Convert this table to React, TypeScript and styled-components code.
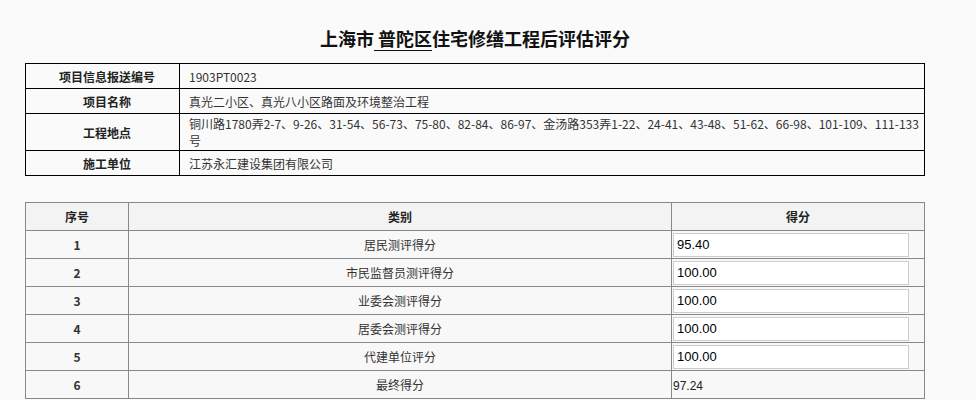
import React from "react";
import styled, { createGlobalStyle } from "styled-components";

const GlobalStyle = createGlobalStyle`
  html, body {
    margin: 0;
    padding: 0;
    background: #fafafa;
  }
  body {
    font-family: "Noto Sans CJK SC", "Noto Sans", sans-serif;
    font-size: 12px;
    color: #333;
  }
`;

const Page = styled.div`
  width: 900px;
  padding: 26px 0 0 25px;
`;

const Title = styled.h2`
  margin: 0 0 13px;
  font-size: 18px;
  line-height: 24px;
  font-weight: bold;
  color: #111;
  text-align: center;
  u {
    text-decoration: underline;
    text-decoration-thickness: 1px;
    text-underline-offset: 4px;
  }
`;

const InfoTable = styled.table`
  width: 900px;
  border-collapse: collapse;
  table-layout: fixed;
  td {
    border: 1px solid #000;
    height: 25px;
    padding: 1px 0 1px 9px;
    line-height: 17px;
    box-sizing: border-box;
  }
`;

const InfoLabel = styled.td`
  width: 154px;
  text-align: center;
  font-weight: bold;
  color: #222;
`;

const InfoValue = styled.td`
  text-align: left;
  color: #333;
`;

const ScoreTable = styled.table`
  width: 900px;
  margin-top: 26px;
  border-collapse: collapse;
  table-layout: fixed;
  th, td {
    border: 1px solid #888;
    height: 28px;
    padding: 0;
    text-align: center;
    box-sizing: border-box;
  }
`;

const HeadCell = styled.th<{ $w?: number }>`
  width: ${(p) => (p.$w ? `${p.$w}px` : "auto")};
  background: #f3f3f3;
  font-weight: bold;
  color: #222;
`;

const Cell = styled.td<{ $bold?: boolean; $left?: boolean }>`
  background: #f8f8f8;
  font-weight: ${(p) => (p.$bold ? "bold" : "normal")};
  text-align: ${(p) => (p.$left ? "left" : "center")} !important;
  color: #333;
`;

const ScoreInput = styled.input`
  display: block;
  box-sizing: border-box;
  width: 236px;
  height: 24px;
  margin: 0 0 0 1px;
  padding: 0 3px;
  border: 1px solid #ccc;
  background: #fff;
  font-family: "Liberation Sans", Arial, sans-serif;
  font-size: 13px;
  color: #000;
  outline: none;
`;

const FinalScore = styled.span`
  font-family: "Liberation Sans", Arial, sans-serif;
  font-size: 12px;
  color: #222;
  padding-left: 1px;
`;

const info = [
  { label: "项目信息报送编号", value: "1903PT0023" },
  { label: "项目名称", value: "真光二小区、真光八小区路面及环境整治工程" },
  {
    label: "工程地点",
    value:
      "铜川路1780弄2-7、9-26、31-54、56-73、75-80、82-84、86-97、金汤路353弄1-22、24-41、43-48、51-62、66-98、101-109、111-133号",
  },
  { label: "施工单位", value: "江苏永汇建设集团有限公司" },
];

const scores = [
  { no: 1, name: "居民测评得分", score: "95.40" },
  { no: 2, name: "市民监督员测评得分", score: "100.00" },
  { no: 3, name: "业委会测评得分", score: "100.00" },
  { no: 4, name: "居委会测评得分", score: "100.00" },
  { no: 5, name: "代建单位评分", score: "100.00" },
];

export default function App() {
  return (
    <>
      <GlobalStyle />
      <Page>
        <Title>
          上海市<u>&nbsp;普陀区</u>住宅修缮工程后评估评分
        </Title>
        <InfoTable>
          <tbody>
            {info.map((r) => (
              <tr key={r.label}>
                <InfoLabel>{r.label}</InfoLabel>
                <InfoValue>{r.value}</InfoValue>
              </tr>
            ))}
          </tbody>
        </InfoTable>
        <ScoreTable>
          <thead>
            <tr>
              <HeadCell $w={103}>序号</HeadCell>
              <HeadCell>类别</HeadCell>
              <HeadCell $w={253}>得分</HeadCell>
            </tr>
          </thead>
          <tbody>
            {scores.map((s) => (
              <tr key={s.no}>
                <Cell $bold>{s.no}</Cell>
                <Cell>{s.name}</Cell>
                <Cell $left>
                  <ScoreInput defaultValue={s.score} />
                </Cell>
              </tr>
            ))}
            <tr>
              <Cell $bold>6</Cell>
              <Cell>最终得分</Cell>
              <Cell $left>
                <FinalScore>97.24</FinalScore>
              </Cell>
            </tr>
          </tbody>
        </ScoreTable>
      </Page>
    </>
  );
}
